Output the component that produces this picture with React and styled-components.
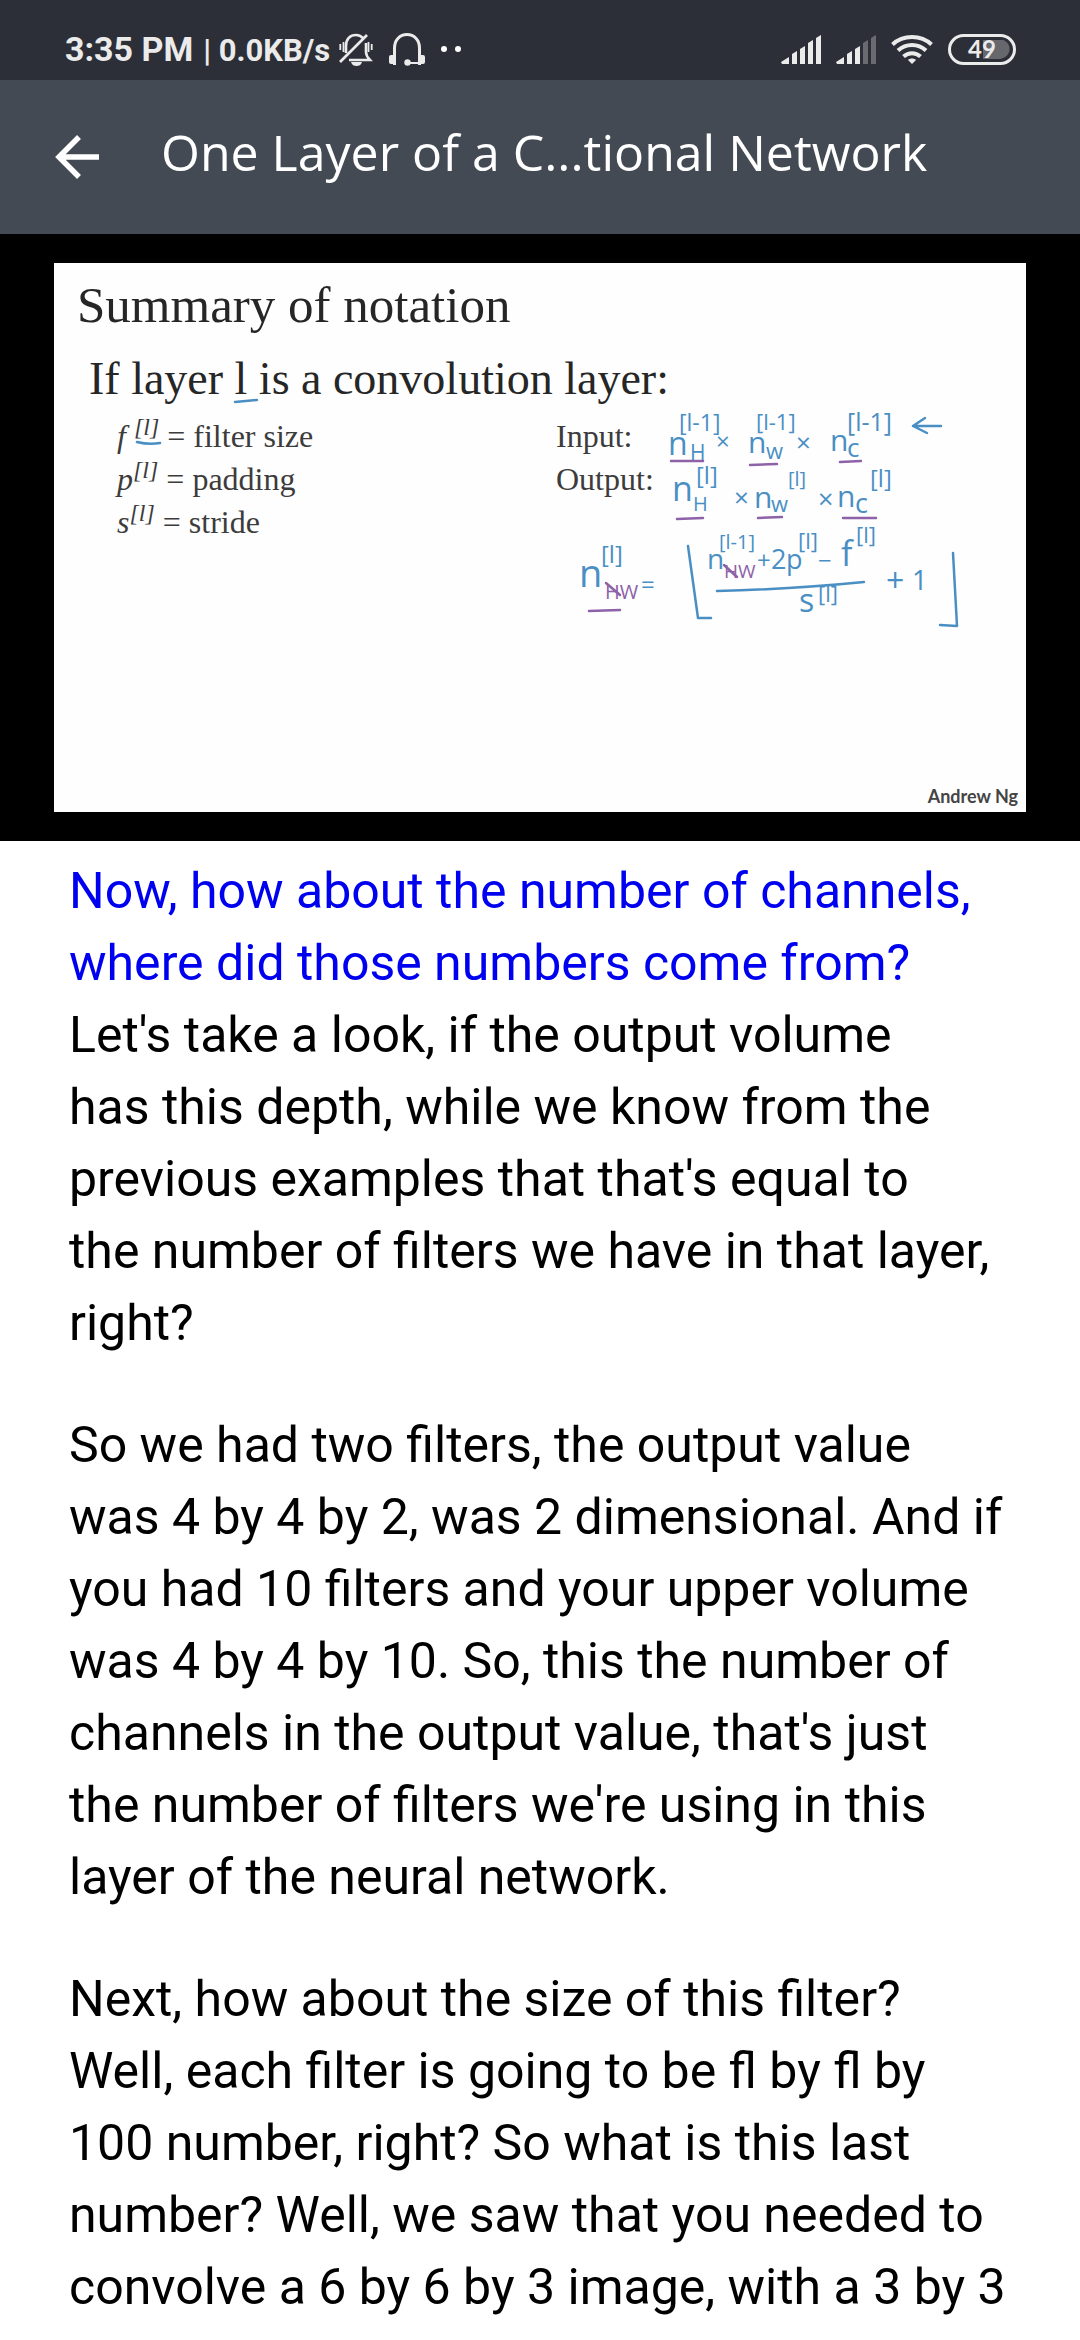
import React from "react";
import styled, { createGlobalStyle } from "styled-components";

const Global = createGlobalStyle`
  * { box-sizing: border-box; }
  body { margin: 0; background: #fff; }
`;

const StatusBar = styled.div`
  height: 80px;
  padding: 18px 64px 0 65px;
  display: flex;
  align-items: center;
  justify-content: space-between;
  background: #2c2f37;
  color: #ebebeb;
  font-family: Roboto, sans-serif;
  font-weight: 700;
`;
const StatusGroup = styled.div`
  display: flex;
  align-items: center;
  gap: ${(p) => p.$gap}px;
`;
const StatusText = styled.span`
  display: flex;
  align-items: baseline;
  gap: 10px;
  padding-top: 2px;
  line-height: 40px;
`;
const Clock = styled.span`
  font-size: 34px;
`;
const Speed = styled.span`
  font-size: 31px;
`;
const Battery = styled.span`
  width: 68px;
  height: 31px;
  display: grid;
  place-items: center;
  border: 3px solid #ebebeb;
  border-radius: 16px;
  font: 700 24px/24px Lato, sans-serif;
  background: linear-gradient(90deg, #66686d 18px, transparent 18px) right 12px center / 18px 19px no-repeat,
    radial-gradient(circle at 9px 9px, #66686d 9px, transparent 10px) right 3px center / 19px 19px no-repeat;
`;

const AppBar = styled.header`
  height: 154px;
  padding: 0 54px;
  display: flex;
  align-items: center;
  gap: 61px;
  background: #444a53;
  color: #fff;
`;
const BackButton = styled.button`
  display: flex;
  padding: 0;
  border: 0;
  background: none;
  color: inherit;
`;
const Title = styled.h1`
  margin: 0;
  padding-bottom: 10px;
  font: 400 50px/68px "Open Sans", sans-serif;
  white-space: nowrap;
`;

const Video = styled.section`
  padding: 29px 54px;
  background: #000;
`;
const Slide = styled.div`
  position: relative;
  aspect-ratio: 972 / 549;
  padding: 12px 8px 4px 23px;
  display: flex;
  flex-direction: column;
  background: #fefefe;
  color: #262626;
  font-family: "Liberation Serif", serif;
`;
const SlideTitle = styled.h2`
  margin: 0;
  font-size: 51px;
  font-weight: 400;
  line-height: 60px;
`;
const SlideLead = styled.p`
  margin: 16px 12px 0;
  font-size: 46px;
  line-height: 56px;
`;
const Notation = styled.div`
  margin: 8px 40px 0;
  display: grid;
  grid-template-columns: 439px 1fr;
  font-size: 32px;
  line-height: 43px;
  color: #3c3c3c;
`;
const Sup = styled.sup`
  font-size: 24px;
  line-height: 0;
  font-style: italic;
`;
const Credit = styled.span`
  margin-top: auto;
  align-self: flex-end;
  font: 700 18px/24px Lato, sans-serif;
  color: #444;
`;
const Ink = styled.svg`
  position: absolute;
  inset: 0;
  width: 100%;
  height: 100%;
  fill: none;
  stroke-width: 2.5;
  stroke-linecap: round;
  stroke-linejoin: round;
`;
const Pen = styled.text`
  font-family: "Open Sans", sans-serif;
  font-size: ${(p) => p.$size}px;
  fill: ${(p) => p.$color || "#4a8fc4"};
  stroke: none;
`;

const Transcript = styled.main`
  padding: 14px 70px 0 69px;
  font: 400 50px/72px Roboto, sans-serif;
  color: #000;
`;
const Paragraph = styled.p`
  margin: 0 0 50px;
  white-space: pre-line;
`;
const Current = styled.span`
  color: #0000f0;
`;

const BLUE = "#4a8fc4";
const PURPLE = "#8d62a8";

const marks = [
  ["n", 614, 192, 32], ["H", 636, 197, 21], ["[l-1]", 625, 168, 23], ["×", 662, 187, 24],
  ["n", 694, 190, 30], ["w", 712, 196, 22], ["[l-1]", 702, 167, 22], ["×", 742, 189, 26],
  ["n", 776, 188, 30], ["c", 793, 194, 26], ["[l-1]", 793, 168, 25],
  ["n", 618, 238, 34], ["H", 639, 248, 20], ["[l]", 642, 221, 24], ["×", 680, 244, 26],
  ["n", 700, 245, 30], ["w", 717, 249, 22], ["[l]", 734, 223, 20], ["×", 764, 246, 27],
  ["n", 783, 244, 30], ["c", 801, 250, 27], ["[l]", 816, 224, 24],
  ["n", 525, 324, 38], ["[l]", 547, 300, 24], ["=", 587, 330, 24],
  ["n", 653, 306, 28], ["[l-1]", 665, 286, 20], ["+", 703, 306, 24], ["2", 717, 306, 27],
  ["p", 732, 306, 27], ["[l]", 744, 286, 22], ["−", 764, 306, 24],
  ["f", 787, 303, 34], ["[l]", 802, 280, 22],
  ["s", 745, 349, 32], ["[l]", 764, 339, 22], ["+", 832, 329, 32], ["1", 858, 327, 27],
];

const ClockRow = () => (
  <StatusText>
    <Clock>3:35 PM</Clock>
    <Speed>| 0.0KB/s</Speed>
  </StatusText>
);

const MutedBell = () => (
  <svg width="34" height="33" viewBox="0 0 34 33" fill="none" stroke="#ebebeb" strokeWidth="2.600">
    <path d="M7 20V13C7 6 11 2 17 2c3 0 5 1 7 3M27 10v9c0 4 2 6 4 8H10" />
    <path d="M1 29L28 2" />
    <path d="M1.300 11v6M4.500 9v10M29.500 9v10M32.700 11v6" strokeWidth="1.800" />
    <path d="M12 29h11c-1 3-3 4-5.500 4S13 32 12 29z" fill="#ebebeb" stroke="none" />
  </svg>
);
const Headset = () => (
  <svg width="36" height="33" viewBox="0 0 36 33" fill="none" stroke="#ebebeb" strokeWidth="3">
    <path d="M5.500 32V15C5.500 7 11 1.500 18 1.500S30.500 7 30.500 15V32" />
    <path d="M19 30h12" strokeWidth="2" />
    <rect x="0" y="22" width="6" height="9" rx="2" fill="#ebebeb" stroke="none" />
    <rect x="30" y="22" width="6" height="9" rx="2" fill="#ebebeb" stroke="none" />
    <circle cx="18.500" cy="29.500" r="3.200" fill="#ebebeb" stroke="none" />
  </svg>
);
const Dots = () => (
  <svg width="20" height="8" viewBox="0 0 20 8" fill="#fff">
    <circle cx="3" cy="4" r="3" />
    <circle cx="17" cy="4" r="3" />
  </svg>
);
const Signal = ({ level }) => (
  <svg width="40" height="29" viewBox="0 0 40 29">
    {["M0 27l8-5v7H1z", "M11 19l5-3v13h-5z", "M19 14l5-3v18h-5z", "M27 8l5-3v24h-5z", "M35 3l5-3v29h-5z"].map((d, i) => (
      <path key={d} d={d} fill={i < level ? "#ebebeb" : "#696b70"} />
    ))}
  </svg>
);
const Wifi = () => (
  <svg width="42" height="30" viewBox="0 0 42 30" fill="none" stroke="#ebebeb" strokeWidth="4">
    <path d="M1.500 10.500C12 .5 30 .5 40.500 10.500M7 16.500c8-7.500 20-7.500 28 0M12.500 22.500c5-4.500 12-4.500 17 0" />
    <path d="M17 26c2-2 6-2 8 0l-4 4z" fill="#ebebeb" stroke="none" />
  </svg>
);

export default function App() {
  return (
    <>
      <Global />
      <StatusBar>
        <StatusGroup $gap={16}>
          <StatusGroup $gap={9}>
            <ClockRow />
            <MutedBell />
          </StatusGroup>
          <Headset />
          <Dots />
        </StatusGroup>
        <StatusGroup $gap={15}>
          <Signal level={5} />
          <Signal level={3} />
          <Wifi />
          <Battery>49</Battery>
        </StatusGroup>
      </StatusBar>
      <AppBar>
        <BackButton aria-label="Back">
          <svg width="46" height="46" viewBox="0 0 46 46" fill="none" stroke="#fff" strokeWidth="5.500">
            <path d="M25 3L5 23l20 20M4 23h41" />
          </svg>
        </BackButton>
        <Title>One Layer of a C...tional Network</Title>
      </AppBar>
      <Video>
        <Slide>
          <SlideTitle>Summary of notation</SlideTitle>
          <SlideLead>If layer l is a convolution layer:</SlideLead>
          <Notation>
            <span><i>f</i> <Sup>[l]</Sup> = filter size</span>
            <span>Input:</span>
            <span><i>p</i><Sup>[l]</Sup> = padding</span>
            <span>Output:</span>
            <span><i>s</i><Sup>[l]</Sup> = stride</span>
          </Notation>
          <Credit>Andrew Ng</Credit>
          <Ink viewBox="0 0 972 549" aria-hidden="true">
            {marks.map(([text, x, y, size]) => (
              <Pen key={`${x}-${y}`} x={x} y={y} $size={size}>{text}</Pen>
            ))}
            <Pen x="551" y="336" $size={20} $color={PURPLE}>HW</Pen>
            <Pen x="670" y="315" $size={19} $color={PURPLE}>HW</Pen>
            <g stroke={BLUE}>
              <path d="M181 139L203 137M83 179q12 3 23 1" />
              <path d="M887 163H859M871 155L859 163L873 170" />
              <path d="M634 283L644 355H657M899 290L903 363L886 362" />
              <path d="M663 328Q740 326 810 319" />
            </g>
            <g stroke={PURPLE}>
              <path d="M617 198H649M696 202L723 201M786 199L807 198" />
              <path d="M623 256L649 255M704 255L728 254M789 255H822" />
              <path d="M535 348L566 347M552 320L566 332M670 302L683 314" />
            </g>
          </Ink>
        </Slide>
      </Video>
      <Transcript>
        <Paragraph>
          <Current>{"Now, how about the number of channels,\nwhere did those numbers come from?"}</Current>
          {"\nLet's take a look, if the output volume\nhas this depth, while we know from the\nprevious examples that that's equal to\nthe number of filters we have in that layer,\nright?"}
        </Paragraph>
        <Paragraph>
          {"So we had two filters, the output value\nwas 4 by 4 by 2, was 2 dimensional. And if\nyou had 10 filters and your upper volume\nwas 4 by 4 by 10. So, this the number of\nchannels in the output value, that's just\nthe number of filters we're using in this\nlayer of the neural network."}
        </Paragraph>
        <Paragraph>
          {"Next, how about the size of this filter?\nWell, each filter is going to be fl by fl by\n100 number, right? So what is this last\nnumber? Well, we saw that you needed to\nconvolve a 6 by 6 by 3 image, with a 3 by 3"}
        </Paragraph>
      </Transcript>
    </>
  );
}
